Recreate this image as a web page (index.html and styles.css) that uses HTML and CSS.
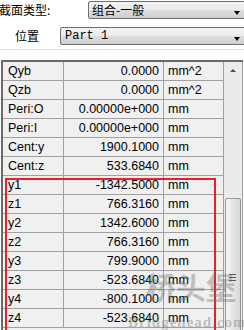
FILE: index.html
```html
<!DOCTYPE html>
<html>
<head>
<meta charset="utf-8">
<link rel="stylesheet" href="styles.css">
</head>
<body>
<div class="page">
  <div class="form">
    <div class="frow r1">
      <span class="lbl lbl1">截面类型:</span>
      <div class="combo c1"><span class="ctext">组合-一般</span><span class="arrow"></span></div>
    </div>
    <div class="frow r2">
      <span class="lbl lbl2">位置</span>
      <div class="combo c2"><span class="ctext mono">Part 1</span><span class="arrow"></span></div>
    </div>
  </div>
  <div class="sep"></div>
  <div class="gridwrap">
    <div class="grid">
      <div class="row"><div class="c name">Qyb</div><div class="c val">0.0000</div><div class="c unit">mm^2</div></div>
      <div class="row"><div class="c name">Qzb</div><div class="c val">0.0000</div><div class="c unit">mm^2</div></div>
      <div class="row"><div class="c name">Peri:O</div><div class="c val">0.00000e+000</div><div class="c unit">mm</div></div>
      <div class="row"><div class="c name">Peri:I</div><div class="c val">0.00000e+000</div><div class="c unit">mm</div></div>
      <div class="row"><div class="c name">Cent:y</div><div class="c val">1900.1000</div><div class="c unit">mm</div></div>
      <div class="row"><div class="c name">Cent:z</div><div class="c val">533.6840</div><div class="c unit">mm</div></div>
      <div class="row"><div class="c name">y1</div><div class="c val">-1342.5000</div><div class="c unit">mm</div></div>
      <div class="row"><div class="c name">z1</div><div class="c val">766.3160</div><div class="c unit">mm</div></div>
      <div class="row"><div class="c name">y2</div><div class="c val">1342.6000</div><div class="c unit">mm</div></div>
      <div class="row"><div class="c name">z2</div><div class="c val">766.3160</div><div class="c unit">mm</div></div>
      <div class="row"><div class="c name">y3</div><div class="c val">799.9000</div><div class="c unit">mm</div></div>
      <div class="row"><div class="c name">z3</div><div class="c val">-523.6840</div><div class="c unit">mm</div></div>
      <div class="row"><div class="c name">y4</div><div class="c val">-800.1000</div><div class="c unit">mm</div></div>
      <div class="row"><div class="c name">z4</div><div class="c val">-523.6840</div><div class="c unit">mm</div></div>
    </div>
    <div class="scroll">
      <div class="uparrow"></div>
      <div class="thumb"><div class="grip"></div></div>
    </div>
  </div>
  <div class="redbox"></div>
  <div class="wm">桥头堡</div>
  <div class="wm2">Bridgehead.com.cn</div>
</div>
</body>
</html>
```
FILE: styles.css
```css
html, body {
  margin: 0;
  padding: 0;
}
body {
  width: 244px;
  height: 330px;
  overflow: hidden;
  background: #ffffff;
}
.page {
  position: relative;
  width: 244px;
  height: 330px;
  overflow: hidden;
  font-family: "Liberation Sans", Arial, sans-serif;
  font-size: 12.5px;
  color: #000;
}
.form {
  display: flex;
  flex-direction: column;
  padding-top: 1px;
  gap: 8px;
}
.frow {
  display: flex;
  align-items: center;
  height: 18px;
}
.lbl {
  font-family: "Noto Sans CJK SC", sans-serif;
  font-size: 12px;
  line-height: 18px;
}
.lbl1 {
  width: 89px;
  margin-left: -1px;
}
.lbl2 {
  width: 45px;
  padding-left: 15px;
}
.combo {
  position: relative;
  flex: 1;
  height: 16px;
  margin-right: -8px;
  border: 1px solid #707070;
  border-radius: 2px;
  background: linear-gradient(#f2f2f2, #ebebeb 50%, #dddddd 51%, #cfcfcf);
  display: flex;
  align-items: center;
  padding-left: 3px;
}
.ctext {
  font-family: "Noto Sans CJK SC", sans-serif;
  font-size: 12px;
  line-height: 16px;
}
.ctext.mono {
  font-family: "Liberation Mono", "Courier New", monospace;
  font-size: 12px;
  padding-left: 1px;
}
.arrow {
  position: absolute;
  right: 11px;
  top: 9px;
  width: 0;
  height: 0;
  border-left: 3.5px solid transparent;
  border-right: 3.5px solid transparent;
  border-top: 4px solid #000;
}
.sep {
  margin-top: 4px;
  height: 1px;
  background: #d6e0e6;
}
.gridwrap {
  margin-top: 10px;
  margin-left: 1px;
  width: 240px;
  display: flex;
  border-top: 2px solid #6a6a6a;
  border-left: 2px solid #6a6a6a;
  background: #f0f0f0;
}
.grid {
  display: flex;
  flex-direction: column;
}
.row {
  display: flex;
  height: 18px;
  border-bottom: 1px solid #a0a0a0;
}
.c {
  height: 18px;
  line-height: 18px;
  white-space: nowrap;
  overflow: hidden;
  background: #f0f0f0;
}
.name {
  width: 55px;
  padding-left: 5px;
  border-right: 1px solid #a0a0a0;
}
.val {
  width: 95px;
  padding-right: 4px;
  text-align: right;
  border-right: 1px solid #a0a0a0;
}
.unit {
  width: 55px;
  padding-left: 4px;
  border-right: 1px solid #a0a0a0;
}
.scroll {
  position: relative;
  width: 18px;
  height: 280px;
  background: #ebebeb;
  border-right: 1px solid #a0a0a0;
}
.uparrow {
  position: absolute;
  left: 6px;
  top: 7px;
  width: 0;
  height: 0;
  border-left: 3px solid transparent;
  border-right: 3px solid transparent;
  border-bottom: 3px solid #4a4a4a;
}
.thumb {
  position: absolute;
  left: 1px;
  top: 136px;
  width: 14px;
  height: 160px;
  border: 1px solid #979797;
  border-radius: 2px;
  background: linear-gradient(90deg, #f6f6f6, #e6e6e6 50%, #d8d8d8);
}
.grip {
  position: absolute;
  left: 3px;
  top: 75px;
  width: 7px;
  height: 5px;
  border-top: 1px solid #555;
  border-bottom: 1px solid #555;
  background: linear-gradient(transparent 2px, #555 2px, #555 3px, transparent 3px);
}
.redbox {
  position: absolute;
  left: 5px;
  top: 178px;
  width: 207px;
  height: 200px;
  border: 2px solid #e8202a;
}
.wm {
  position: absolute;
  left: 146px;
  top: 264px;
  font-family: "Noto Sans CJK SC", sans-serif;
  font-size: 30px;
  font-weight: bold;
  letter-spacing: 0;
  color: rgba(110, 110, 110, 0.4);
  line-height: 44px;
}
.wm2 {
  position: absolute;
  left: 128px;
  top: 314px;
  font-family: "Liberation Serif", serif;
  font-size: 15px;
  font-weight: bold;
  color: rgba(110, 110, 110, 0.4);
  letter-spacing: 1px;
}
```
